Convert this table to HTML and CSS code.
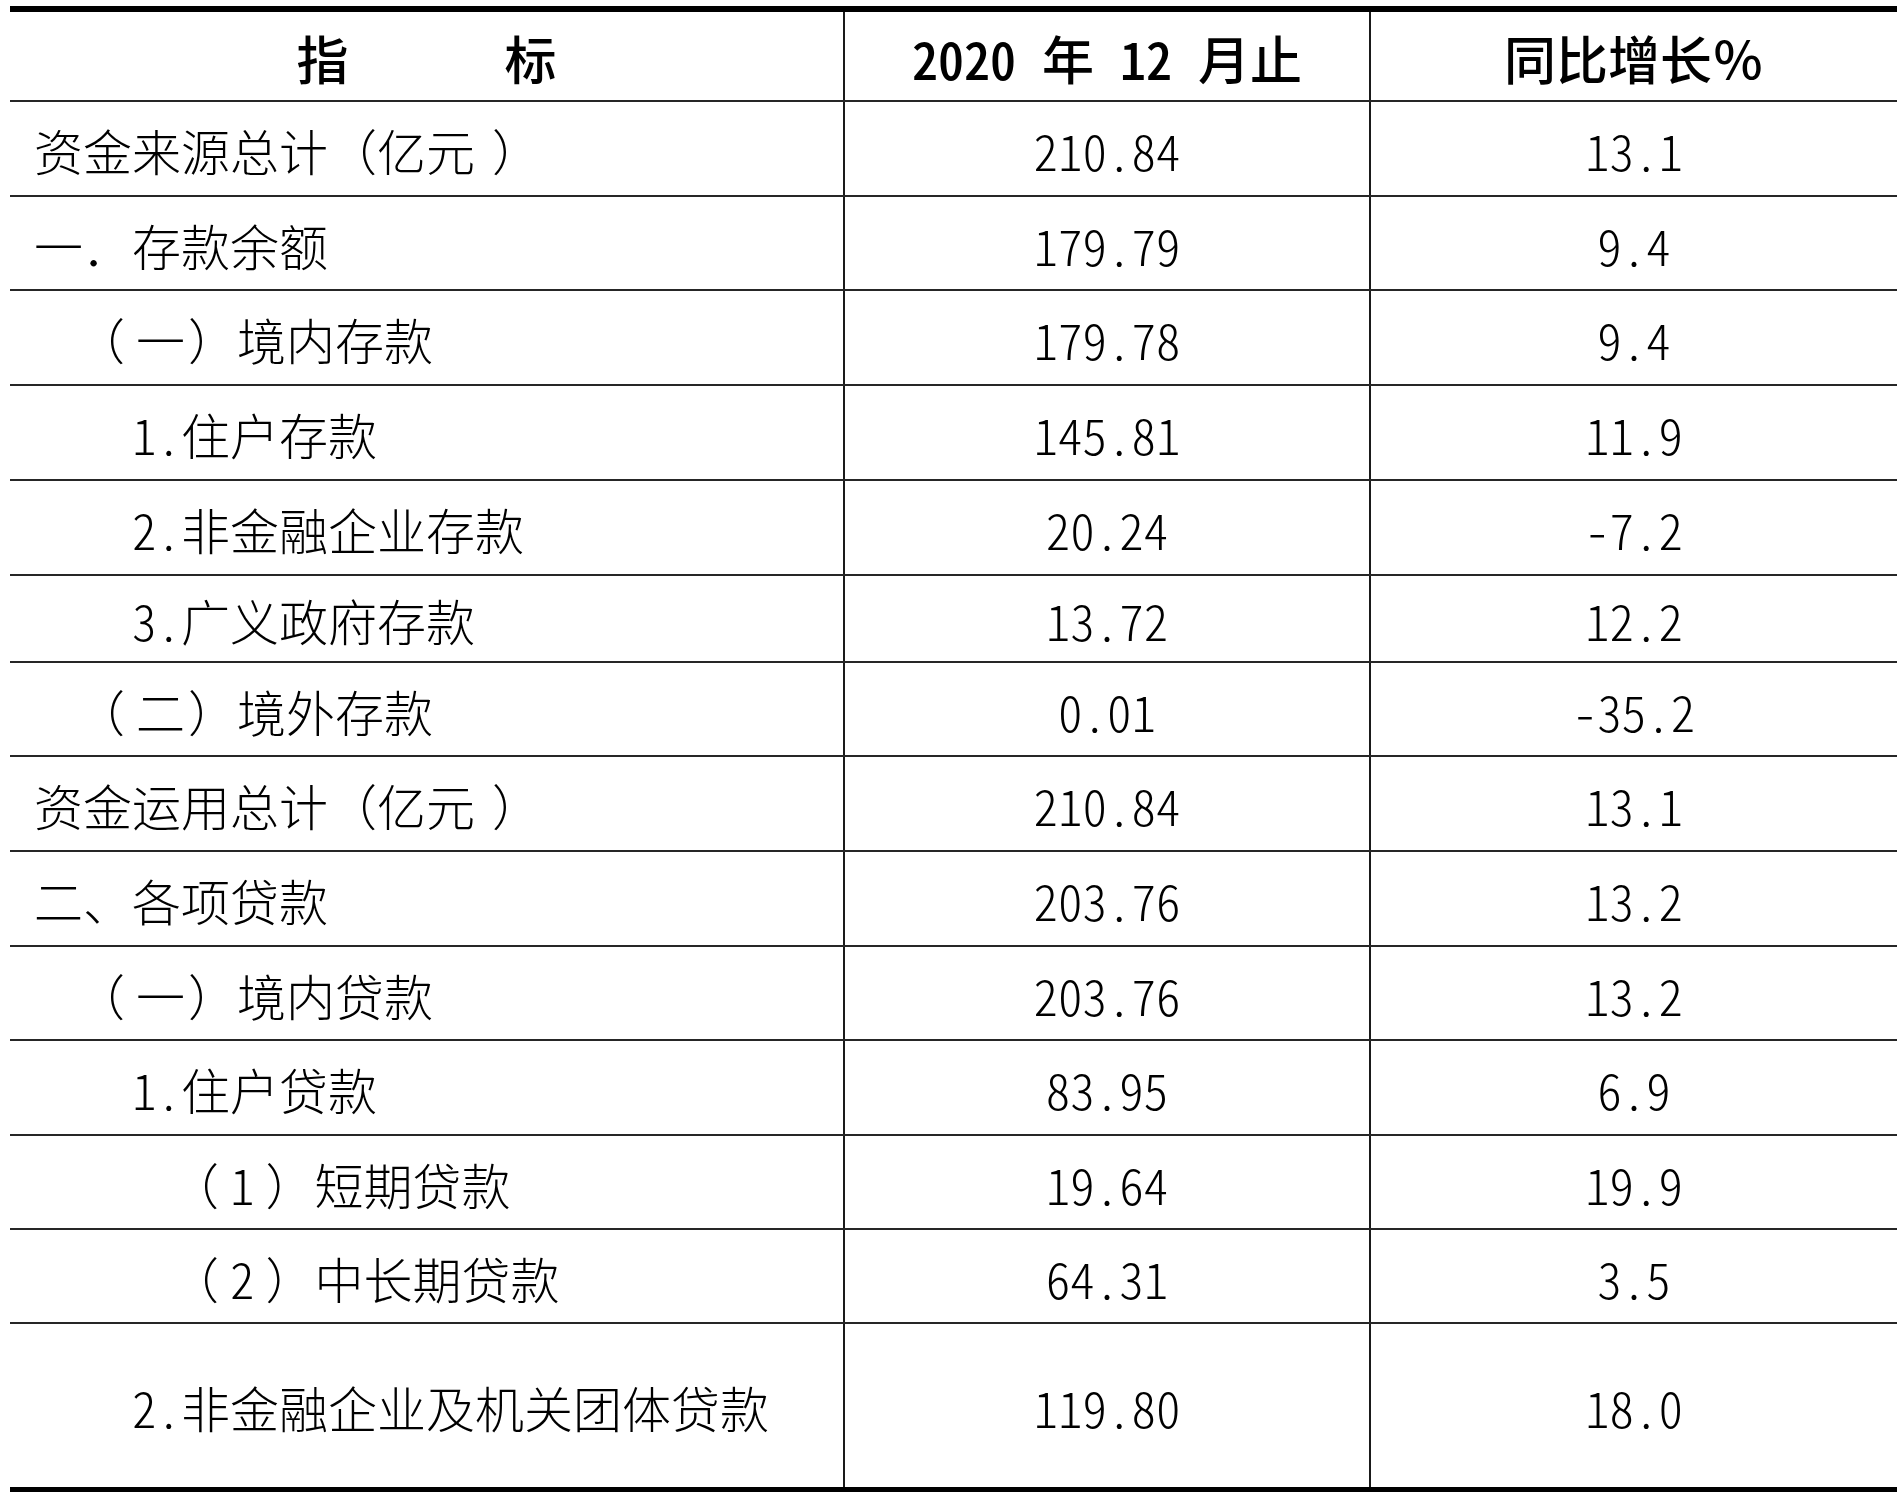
FILE: index.html
```html
<!DOCTYPE html>
<html lang="zh-CN">
<head>
<meta charset="utf-8">
<title>指标</title>
<link rel="stylesheet" href="styles.css">
</head>
<body>
<div class="sheet">
  <div class="row head">
    <div class="cell c1 center">指　　　标</div>
    <div class="cell c2 center num">2020 年 12 月止</div>
    <div class="cell c3 center">同比增长％</div>
  </div>
  <div class="row">
    <div class="cell c1">资金来源总计（亿元<span class="pc-end">）</span></div>
    <div class="cell c2 center num">210.84</div>
    <div class="cell c3 center num">13.1</div>
  </div>
  <div class="row h94">
    <div class="cell c1">一．存款余额</div>
    <div class="cell c2 center num">179.79</div>
    <div class="cell c3 center num">9.4</div>
  </div>
  <div class="row">
    <div class="cell c1 i1"><span class="po">（</span>一<span class="pc">）</span>境内存款</div>
    <div class="cell c2 center num">179.78</div>
    <div class="cell c3 center num">9.4</div>
  </div>
  <div class="row">
    <div class="cell c1 i2"><span class="n">1.</span>住户存款</div>
    <div class="cell c2 center num">145.81</div>
    <div class="cell c3 center num">11.9</div>
  </div>
  <div class="row">
    <div class="cell c1 i2"><span class="n">2.</span>非金融企业存款</div>
    <div class="cell c2 center num">20.24</div>
    <div class="cell c3 center num">-7.2</div>
  </div>
  <div class="row short">
    <div class="cell c1 i2"><span class="n">3.</span>广义政府存款</div>
    <div class="cell c2 center num">13.72</div>
    <div class="cell c3 center num">12.2</div>
  </div>
  <div class="row h94">
    <div class="cell c1 i1"><span class="po">（</span>二<span class="pc">）</span>境外存款</div>
    <div class="cell c2 center num">0.01</div>
    <div class="cell c3 center num">-35.2</div>
  </div>
  <div class="row">
    <div class="cell c1">资金运用总计（亿元<span class="pc-end">）</span></div>
    <div class="cell c2 center num">210.84</div>
    <div class="cell c3 center num">13.1</div>
  </div>
  <div class="row">
    <div class="cell c1">二、各项贷款</div>
    <div class="cell c2 center num">203.76</div>
    <div class="cell c3 center num">13.2</div>
  </div>
  <div class="row h94">
    <div class="cell c1 i1"><span class="po">（</span>一<span class="pc">）</span>境内贷款</div>
    <div class="cell c2 center num">203.76</div>
    <div class="cell c3 center num">13.2</div>
  </div>
  <div class="row">
    <div class="cell c1 i2"><span class="n">1.</span>住户贷款</div>
    <div class="cell c2 center num">83.95</div>
    <div class="cell c3 center num">6.9</div>
  </div>
  <div class="row h94">
    <div class="cell c1 i3"><span class="po">（</span><span class="n pn">1</span><span class="pc">）</span>短期贷款</div>
    <div class="cell c2 center num">19.64</div>
    <div class="cell c3 center num">19.9</div>
  </div>
  <div class="row h94">
    <div class="cell c1 i3"><span class="po">（</span><span class="n pn">2</span><span class="pc">）</span>中长期贷款</div>
    <div class="cell c2 center num">64.31</div>
    <div class="cell c3 center num">3.5</div>
  </div>
  <div class="row tall last">
    <div class="cell c1 i2"><span class="n">2.</span>非金融企业及机关团体贷款</div>
    <div class="cell c2 center num">119.80</div>
    <div class="cell c3 center num">18.0</div>
  </div>
</div>
</body>
</html>
```
FILE: styles.css
```css
html, body {
  margin: 0;
  padding: 0;
  background: #ffffff;
}

body {
  font-family: "Noto Sans CJK SC", "Noto Sans", sans-serif;
  color: #000;
}

.sheet {
  margin: 6px 2px 0 10px;
  width: 1887px;
  display: flex;
  flex-direction: column;
}

.row {
  display: grid;
  grid-template-columns: 835px 526px 526px;
  height: 95px;
  box-sizing: border-box;
  border-bottom: 2px solid #262626;
}

.row.h94 { height: 94px; }
.row.short { height: 87px; }
.row.tall { height: 163px; }

.row.head {
  height: 96px;
  border-top: 6px solid #000;
}

.row.last {
  height: 169px;
  border-bottom: 6px solid #000;
}

.cell {
  box-sizing: border-box;
  display: flex;
  align-items: center;
  font-size: 49px;
  font-weight: 300;
  line-height: 1;
  white-space: pre;
  text-spacing-trim: space-all;
  padding-left: 24px;
  padding-top: 2px;
}

.num, .n {
  font-feature-settings: "hwid" 1;
}

/* spacing that places the parentheses like the original's centred glyphs */
.po {
  margin-right: 11px;
}

.pc {
  margin-left: 3px;
}

.n.pn {
  margin-right: 8px;
}

.pc-end {
  margin-left: 17px;
}

.cell.c1, .cell.c2 {
  border-right: 2px solid #1a1a1a;
}

.cell.center {
  justify-content: center;
  padding-left: 0;
}

.head .cell {
  font-size: 52px;
  font-weight: 500;
  padding-top: 4px;
}

.cell.i1 { padding-left: 66px; }
.cell.i2 { padding-left: 122px; }
.cell.i3 { padding-left: 160px; }
```
